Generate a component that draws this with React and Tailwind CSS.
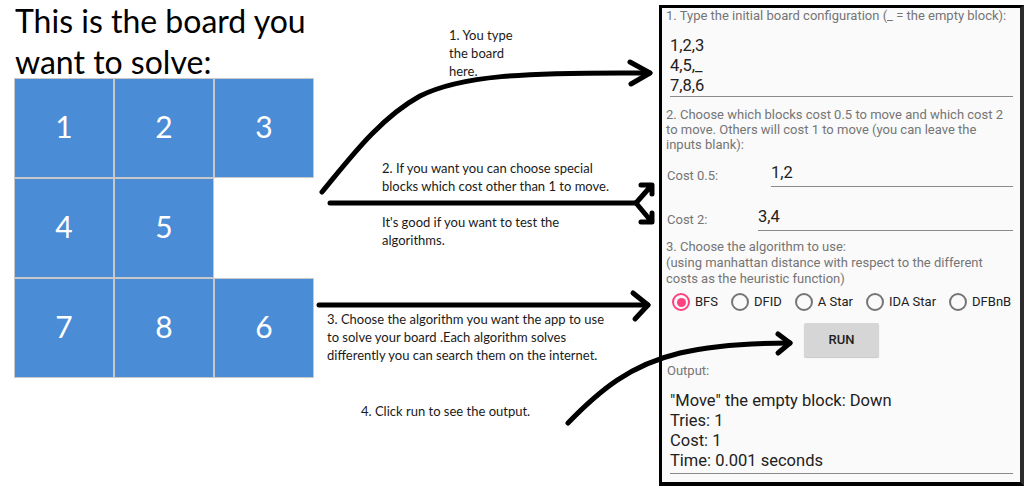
import React from "react";

const tiles = ["1", "2", "3", "4", "5", "", "7", "8", "6"];
const algos = ["BFS", "DFID", "A Star", "IDA Star", "DFBnB"];

const Arrows = () => (
  <svg
    className="absolute left-0 top-0 pointer-events-none"
    width="1024"
    height="500"
    viewBox="0 0 1024 500"
    fill="none"
    stroke="#000"
    strokeWidth="5"
    strokeLinecap="round"
    strokeLinejoin="round"
  >
    {/* 1 -> board input */}
    <path d="M322 192 C 350 158, 380 118, 420 96 C 460 76, 520 72, 650 73" />
    <path d="M630 62 L650 73 L631 84" />
    {/* 2 -> costs (fork) */}
    <path d="M330 203 L636 203" />
    <path d="M636 203 L651 186 M641 185 L652 185 L652 194" />
    <path d="M636 203 L651 221 M641 222 L652 222 L652 213" />
    {/* 3 -> algorithms */}
    <path d="M319 305 L648 305" />
    <path d="M633 293 L648 305 L635 319" />
    {/* 4 -> run */}
    <path d="M568 423 C 600 390, 630 365, 680 353 C 710 346, 750 343, 790 343" />
    <path d="M778 334 L790 343 L778 353" />
  </svg>
);

const Radio = ({ label, checked }) => (
  <div className="flex items-center gap-[5px]">
    <span
      className={`flex items-center justify-center w-[18px] h-[18px] rounded-full border-2 ${
        checked ? "border-[#ff4081]" : "border-[#757575]"
      }`}
    >
      {checked && <span className="w-[9px] h-[9px] rounded-full bg-[#ff4081]" />}
    </span>
    <span className="text-[13px] text-[#212121]">{label}</span>
  </div>
);

const Phone = () => (
  <div className="w-[365px] h-[481px] mt-[5px] border-l-[3px] border-t-[3px] border-b-[4px] border-r-[4px] border-black border-r-[#2b2b2b] bg-[#fafafa] font-['Roboto',sans-serif]">
    <p className="pl-[4px] text-[13px] leading-[16px] text-[#757575] whitespace-nowrap">
      1. Type the initial board configuration (_ = the empty block):
    </p>

    <div className="mt-[12px] ml-[8px] mr-[7px] border-b border-[#8a8a8a] text-[16.5px] leading-[20px] text-[#212121]">
      <p>1,2,3</p>
      <p>4,5,_</p>
      <p>7,8,6</p>
    </div>

    <p className="mt-[10px] pl-[4px] pr-[10px] text-[13px] leading-[15px] text-[#757575]">
      2. Choose which blocks cost 0.5 to move and which cost 2 to move. Others will cost 1 to move (you can leave the inputs blank):
    </p>

    <div className="mt-[10px] flex items-center pl-[5px] pr-[7px]">
      <span className="w-[104px] mt-[3px] text-[13px] text-[#757575]">Cost 0.5:</span>
      <div className="flex-1 pt-[1px] pb-[3px] border-b border-[#8a8a8a] text-[16.5px] leading-[20px] text-[#212121]">1,2</div>
    </div>

    <div className="mt-[19px] flex items-center pl-[5px] pr-[7px]">
      <span className="w-[91px] mt-[3px] text-[13px] text-[#757575]">Cost 2:</span>
      <div className="flex-1 pt-[1px] pb-[3px] border-b border-[#8a8a8a] text-[16.5px] leading-[20px] text-[#212121]">3,4</div>
    </div>

    <div className="mt-[8px] pl-[4px] pr-[10px] text-[13px] leading-[16px] text-[#757575]">
      <p>3. Choose the algorithm to use:</p>
      <p>(using manhattan distance with respect to the different costs as the heuristic function)</p>
    </div>

    <div className="mt-[3px] h-[24px] flex items-center gap-[13px] pl-[10px]">
      {algos.map((a, i) => (
        <Radio key={a} label={a} checked={i === 0} />
      ))}
    </div>

    <button className="mt-[9px] ml-[142px] w-[75px] h-[34px] rounded-[2px] bg-[#d6d6d6] shadow-[0_1px_1px_rgba(0,0,0,0.2)] text-[13px] font-medium text-[#212121]">
      RUN
    </button>

    <p className="mt-[6px] pl-[5px] text-[13px] leading-[16px] text-[#757575]">Output:</p>

    <div className="mt-[12px] ml-[8px] mr-[7px] pb-[2px] border-b border-[#8a8a8a] text-[16.5px] leading-[20px] text-[#212121]">
      <p>"Move" the empty block: Down</p>
      <p>Tries: 1</p>
      <p>Cost: 1</p>
      <p>Time: 0.001 seconds</p>
    </div>
  </div>
);

export default function App() {
  return (
    <div className="relative w-[1024px] h-[500px] bg-white overflow-hidden flex">
      {/* board */}
      <div className="w-[320px] shrink-0 font-['Lato',sans-serif]">
        <h1 className="h-[78px] pl-[15px] text-[32px] leading-[41px] text-black font-normal">
          This is the board you want to solve:
        </h1>
        <div className="ml-[14px] grid grid-cols-3 w-[300px]">
          {tiles.map((t, i) =>
            t ? (
              <div
                key={i}
                className="h-[100px] flex items-center justify-center pb-[4px] border border-[#c8c8c8] bg-[#4a8cd6] text-white text-[30px]"
              >
                {t}
              </div>
            ) : (
              <div key={i} className="h-[100px]" />
            )
          )}
        </div>
      </div>

      {/* notes */}
      <div className="w-[339px] shrink-0 flex flex-col font-['Lato',sans-serif] text-[13px] leading-[18px] text-[#1a1a1a]">
        <p className="mt-[26px] ml-[129px]">1. You type<br />the board<br />here.</p>
        <p className="mt-[79px] ml-[62px]">2. If you want you can choose special<br />blocks which cost other than 1 to move.</p>
        <p className="mt-[18px] ml-[62px]">It's good if you want to test the<br />algorithms.</p>
        <p className="mt-[61px] ml-[7px]">
          3. Choose the algorithm you want the app to use<br />to solve your board .Each algorithm solves<br />differently you can search them on the internet.
        </p>
        <p className="mt-[38px] ml-[41px]">4. Click run to see the output.</p>
      </div>

      <Phone />
      <Arrows />
    </div>
  );
}
